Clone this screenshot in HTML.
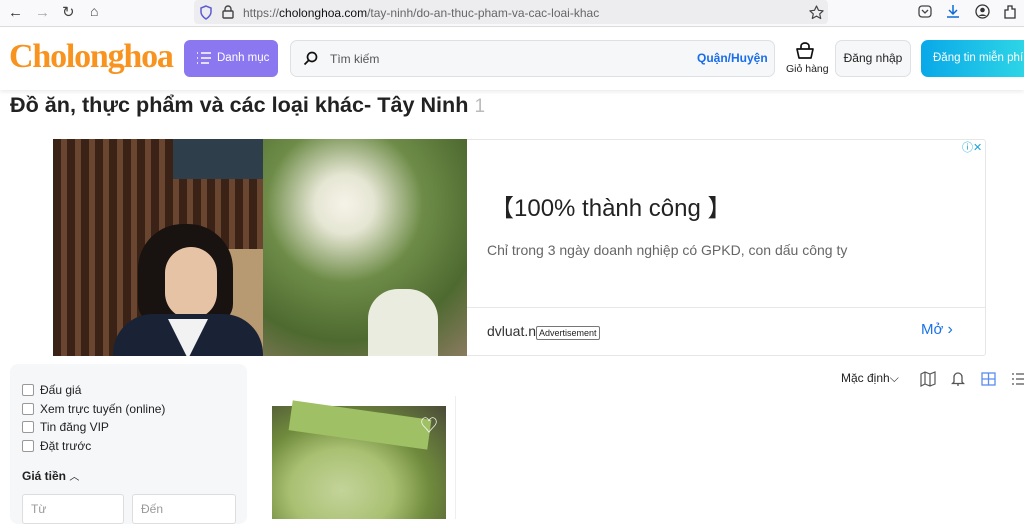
<!DOCTYPE html>
<html><head><meta charset="utf-8"><style>
*{box-sizing:border-box;margin:0;padding:0}
body{width:1024px;height:519px;overflow:hidden;background:#fff;font-family:"Liberation Sans","Noto Sans CJK SC",sans-serif;position:relative;color:#222}
.a{position:absolute}
</style></head><body>
<div class="a" style="left:0;top:0;width:1024px;height:27px;background:#f9f9fb;border-bottom:1px solid #ddd"></div>
<div class="a" style="left:8px;top:4px;font-size:15px;color:#333">←</div>
<div class="a" style="left:35px;top:4px;font-size:15px;color:#aaa">→</div>
<div class="a" style="left:62px;top:3px;font-size:15px;color:#444">↻</div>
<div class="a" style="left:90px;top:3px;font-size:14px;color:#444">⌂</div>
<div class="a" style="left:194px;top:0;width:634px;height:24px;background:#ededf0;border-radius:4px"></div>
<svg class="a" style="left:199px;top:5px" width="14" height="15"><path d="M7 1L2 3v4c0 3 2 5 5 7 3-2 5-4 5-7V3z" fill="none" stroke="#5b5bd6" stroke-width="1.5"/></svg>
<svg class="a" style="left:222px;top:5px" width="12" height="14"><rect x="1" y="6" width="10" height="7" rx="1" fill="none" stroke="#444" stroke-width="1.4"/><path d="M3 6V4a3 3 0 0 1 6 0v2" fill="none" stroke="#444" stroke-width="1.4"/></svg>
<div class="a" style="left:243px;top:6px;font-size:12px;color:#666">https://<span style="color:#111">cholonghoa.com</span>/tay-ninh/do-an-thuc-pham-va-cac-loai-khac</div>
<svg class="a" style="left:809px;top:5px" width="15" height="15"><path d="M7.5 1l2 4.3 4.6.5-3.4 3.1 1 4.6-4.2-2.4-4.2 2.4 1-4.6L.9 5.8l4.6-.5z" fill="none" stroke="#444" stroke-width="1.2" stroke-linejoin="round"/></svg>
<svg class="a" style="left:918px;top:5px" width="14" height="14"><rect x="1" y="1" width="12" height="11" rx="3" fill="none" stroke="#444" stroke-width="1.3"/><path d="M4 5l3 3 3-3" fill="none" stroke="#444" stroke-width="1.3"/></svg>
<svg class="a" style="left:946px;top:4px" width="14" height="15"><path d="M7 1v9M3 6l4 4 4-4M1 13h12" fill="none" stroke="#0a6cd6" stroke-width="1.5"/></svg>
<svg class="a" style="left:975px;top:4px" width="15" height="15"><circle cx="7.5" cy="7.5" r="6.5" fill="none" stroke="#333" stroke-width="1.3"/><circle cx="7.5" cy="6" r="2.3" fill="#333"/><path d="M3.5 12a5 4 0 0 1 8 0" fill="#333"/></svg>
<svg class="a" style="left:1003px;top:4px" width="14" height="15"><path d="M2 14V6h3V2h4v3h3v9z" fill="none" stroke="#333" stroke-width="1.3"/></svg>
<div class="a" style="left:0;top:28px;width:1024px;height:62px;background:#fff;box-shadow:0 2px 4px rgba(0,0,0,.08)"></div>
<div class="a" style="left:9px;top:38px;font-family:'Liberation Serif',serif;font-weight:bold;font-size:34px;color:#f7931e;letter-spacing:-1.2px">Cholonghoa</div>
<div class="a" style="left:184px;top:40px;width:94px;height:37px;background:#8b78f0;border-radius:6px;color:#fff;font-size:11.5px;line-height:37px;padding-left:33px;white-space:nowrap">Danh mục</div>
<svg class="a" style="left:196px;top:51px" width="16" height="14"><g stroke="#fff" stroke-width="1.6"><path d="M1 2h1M5 2h10M1 7h1M5 7h10M1 12h1M5 12h8"/></g></svg>
<div class="a" style="left:290px;top:40px;width:485px;height:37px;background:#f6f7f9;border:1px solid #dde0e5;border-radius:7px"></div>
<svg class="a" style="left:303px;top:51px" width="15" height="15"><circle cx="9" cy="6" r="4.5" fill="none" stroke="#111" stroke-width="1.7"/><path d="M5.5 9.5L1.5 13.5" stroke="#111" stroke-width="1.8"/></svg>
<div class="a" style="left:330px;top:52px;font-size:12px;color:#555">Tìm kiếm</div>
<div class="a" style="left:697px;top:51px;font-size:12px;color:#1a6dea;font-weight:bold">Quận/Huyện</div>
<svg class="a" style="left:795px;top:42px" width="20" height="17"><path d="M6 7V4a4 3 0 0 1 8 0v3M2 7h16l-2 9H4z" fill="none" stroke="#111" stroke-width="1.7" stroke-linejoin="round"/></svg>
<div class="a" style="left:786px;top:63px;font-size:10.5px;color:#222">Giỏ hàng</div>
<div class="a" style="left:835px;top:40px;width:76px;height:37px;background:#f6f7f9;border:1px solid #dde0e5;border-radius:7px;font-size:12px;line-height:35px;text-align:center;color:#222">Đăng nhập</div>
<div class="a" style="left:921px;top:40px;width:110px;height:37px;background:linear-gradient(90deg,#09a8e8,#30d8e6);border-radius:7px;font-size:11.5px;line-height:37px;padding-left:12px;color:#fff;white-space:nowrap">Đăng tin miễn phí</div>
<div class="a" style="left:10px;top:92px;font-size:21.6px;color:#222;font-weight:bold;white-space:nowrap">Đồ ăn, thực phẩm và các loại khác- Tây Ninh <span style="color:#bbb;font-size:19px;font-weight:normal">1</span></div>
<div class="a" style="left:53px;top:139px;width:933px;height:217px;border:1px solid #e6e6e6;border-radius:3px;background:#fff"></div>
<div class="a" style="left:53px;top:139px;width:414px;height:217px;overflow:hidden;background:linear-gradient(90deg,#3b2418 0%,#5a3a26 25%,#8a6a4e 45%,#c7b08a 55%,#5e6a3e 65%,#7d9a55 80%,#a9b77a 100%)">
 <div class="a" style="left:0;top:0;width:210px;height:217px;background:repeating-linear-gradient(90deg,#3a2216 0 8px,#6a4630 8px 14px)"></div>
 <div class="a" style="left:120px;top:0;width:90px;height:40px;background:#2e3e4a"></div>
 <div class="a" style="left:150px;top:110px;width:110px;height:107px;background:#b89a72;border-radius:10px"></div>
 <div class="a" style="left:210px;top:0;width:204px;height:217px;background:radial-gradient(circle at 40% 30%,#f5f3e8 0,#e6e6d4 15%,#6e8c48 40%,#4e6a30 70%,#8a7a60 100%)"></div>
 <div class="a" style="left:315px;top:150px;width:70px;height:67px;background:#e9ecdf;border-radius:30px 30px 0 0"></div>
 <div class="a" style="left:85px;top:85px;width:95px;height:100px;background:#181210;border-radius:45px 45px 20px 20px"></div>
 <div class="a" style="left:112px;top:108px;width:52px;height:72px;background:#e7c3a6;border-radius:26px"></div>
 <div class="a" style="left:60px;top:175px;width:150px;height:50px;background:#1a2236;border-radius:40px 40px 0 0"></div>
 <div class="a" style="left:115px;top:180px;width:40px;height:40px;background:#f2f2f2;clip-path:polygon(0 0,100% 0,50% 100%)"></div>
</div>
<div class="a" style="left:962px;top:139px;font-size:11px;color:#1aa3d8">ⓘ✕</div>
<div class="a" style="left:490px;top:188px;font-size:24px;color:#222">【100% thành công 】</div>
<div class="a" style="left:487px;top:242px;font-size:14px;color:#666">Chỉ trong 3 ngày doanh nghiệp có GPKD, con dấu công ty</div>
<div class="a" style="left:467px;top:307px;width:518px;height:1px;background:#e8e8e8"></div>
<div class="a" style="left:487px;top:323px;font-size:14px;color:#333">dvluat.n</div>
<div class="a" style="left:536px;top:326px;font-size:9px;color:#222;border:1px solid #777;border-radius:2px;padding:1px 2px;background:#fff">Advertisement</div>
<div class="a" style="left:921px;top:321px;font-size:15px;color:#1a73e8">Mở <span style="font-size:16px">›</span></div>
<div class="a" style="left:10px;top:364px;width:237px;height:160px;background:#f6f7f9;border-radius:8px"></div>
<div class="a" style="left:22px;top:381px;font-size:12px;color:#222;line-height:18.7px">
<div><span style="display:inline-block;width:12px;height:12px;border:1px solid #999;border-radius:2px;background:#fff;vertical-align:-2px;margin-right:6px"></span>Đấu giá</div>
<div><span style="display:inline-block;width:12px;height:12px;border:1px solid #999;border-radius:2px;background:#fff;vertical-align:-2px;margin-right:6px"></span>Xem trực tuyến (online)</div>
<div><span style="display:inline-block;width:12px;height:12px;border:1px solid #999;border-radius:2px;background:#fff;vertical-align:-2px;margin-right:6px"></span>Tin đăng VIP</div>
<div><span style="display:inline-block;width:12px;height:12px;border:1px solid #999;border-radius:2px;background:#fff;vertical-align:-2px;margin-right:6px"></span>Đặt trước</div>
</div>
<div class="a" style="left:22px;top:468px;font-size:12px;color:#222;font-weight:bold">Giá tiền <span style="font-size:10px;font-weight:normal">︿</span></div>
<div class="a" style="left:22px;top:494px;width:102px;height:30px;border:1px solid #ddd;background:#fff;border-radius:3px;font-size:12px;color:#999;padding:7px 8px">Từ</div>
<div class="a" style="left:132px;top:494px;width:104px;height:30px;border:1px solid #ddd;background:#fff;border-radius:3px;font-size:12px;color:#999;padding:7px 8px">Đến</div>
<div class="a" style="left:841px;top:371px;font-size:12px;color:#222">Mặc định⌵</div>
<svg class="a" style="left:920px;top:371px" width="17" height="16"><path d="M1 3l4-2 5 2 5-2v12l-5 2-5-2-4 2zM5 1v12M10 3v12" fill="none" stroke="#555" stroke-width="1.2"/></svg>
<svg class="a" style="left:951px;top:370px" width="14" height="17"><path d="M3 12V7a4 4 0 0 1 8 0v5l1.5 1.5h-11zM6 15h2" fill="none" stroke="#555" stroke-width="1.3"/></svg>
<svg class="a" style="left:981px;top:372px" width="15" height="14"><rect x="1" y="1" width="13" height="12" fill="none" stroke="#5b8cf0" stroke-width="1.3"/><path d="M7.5 1v12M1 7h13" stroke="#5b8cf0" stroke-width="1.3"/></svg>
<svg class="a" style="left:1011px;top:372px" width="13" height="14"><g stroke="#555" stroke-width="1.3"><path d="M1 2h2M5 2h8M1 7h2M5 7h8M1 12h2M5 12h8"/></g></svg>
<div class="a" style="left:455px;top:396px;width:1px;height:123px;background:#eee"></div>
<div class="a" style="left:272px;top:406px;width:174px;height:113px;background:radial-gradient(ellipse at 40% 75%,#c4d49a 0,#a9c072 35%,#6f8a3c 60%,#4a4a38 100%)"></div>
<div class="a" style="left:290px;top:410px;width:140px;height:30px;background:#9fc064;transform:rotate(8deg)"></div>
<div class="a" style="left:420px;top:412px;font-size:18px;color:#fff">♡</div>
</body></html>
